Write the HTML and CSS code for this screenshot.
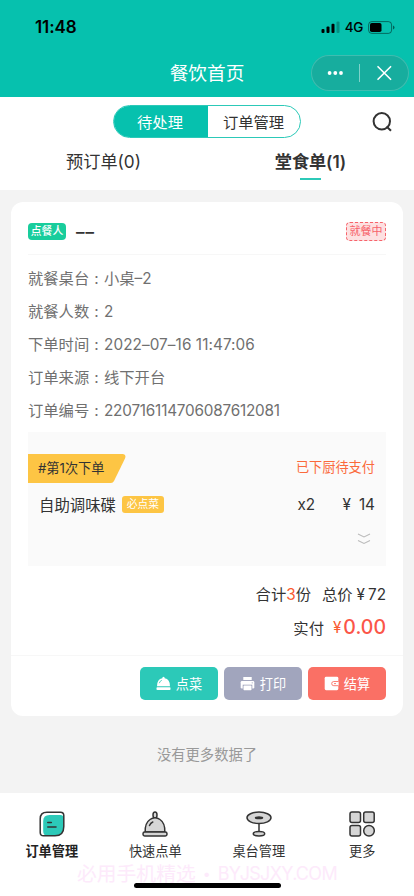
FILE: index.html
```html
<!DOCTYPE html>
<html lang="zh-CN">
<head>
<meta charset="utf-8">
<meta name="viewport" content="width=device-width, initial-scale=1">
<title>餐饮首页</title>
<link rel="stylesheet" href="styles.css">
</head>
<body>
<div class="app">
  <header class="top">
    <div class="status">
      <span class="time">11:48</span>
      <div class="signals">
        <svg width="19" height="12" viewBox="0 0 19 12"><rect x="0.5" y="8" width="3" height="4" rx="1"/><rect x="5.5" y="5.5" width="3" height="6.5" rx="1"/><rect x="10.5" y="2.7" width="3" height="9.3" rx="1"/><rect x="15.5" y="0.5" width="3" height="11.5" rx="1" opacity=".25"/></svg>
        <span class="net">4G</span>
        <svg width="27" height="13" viewBox="0 0 27 13"><rect x=".6" y=".6" width="23" height="11.8" rx="3.2" fill="none" stroke="#000" stroke-opacity=".45"/><rect x="2" y="2" width="11.5" height="9" rx="1.8"/><path d="M25 4.5q1.5 .5 1.5 2t-1.5 2z" opacity=".5"/></svg>
      </div>
    </div>
    <div class="nav">
      <h1>餐饮首页</h1>
      <div class="capsule">
        <svg width="97" height="36" viewBox="0 0 97 36" fill="#fff"><circle cx="18.600" cy="18" r="1.9"/><circle cx="24.300" cy="18" r="1.9"/><circle cx="30" cy="18" r="1.9"/><path d="M48.5 9v18" stroke="#fff" stroke-opacity=".45"/><path d="M67 11.7l12.6 12.6M79.600 11.700L67 24.300" stroke="#fff" stroke-width="1.6" stroke-linecap="round"/></svg>
      </div>
    </div>
  </header>

  <section class="filters">
    <div class="switch"><span class="on">待处理</span><span class="off">订单管理</span></div>
    <svg class="search" width="22" height="22" viewBox="0 0 22 22" fill="none" stroke="#333" stroke-width="2"><circle cx="9.800" cy="10.300" r="8.200"/><path d="M14.500 15.500l4.500 4.300"/></svg>
    <div class="tabs"><span>预订单(0)</span><span class="current">堂食单(1)</span></div>
  </section>

  <main class="content">
    <article class="card">
      <div class="card-head">
        <span class="who">点餐人</span><span class="name">––</span><span class="state">就餐中</span>
      </div>
      <dl class="info">
        <div><dt>就餐桌台</dt><dd>小桌–2</dd></div>
        <div><dt>就餐人数</dt><dd>2</dd></div>
        <div><dt>下单时间</dt><dd class="date">2022–07–16 11:47:06</dd></div>
        <div><dt>订单来源</dt><dd>线下开台</dd></div>
        <div><dt>订单编号</dt><dd class="code">220716114706087612081</dd></div>
      </dl>
      <div class="dishes">
        <div class="round">
          <div class="ribbon"><svg width="98" height="29" viewBox="0 0 98 29"><path d="M0 0H94.500Q98.500 .5 97 4.500L86 27Q85 29 83 29H0z" fill="#fdc544"/></svg><span>#第1次下单</span></div>
          <span class="pending">已下厨待支付</span>
        </div>
        <div class="dish">
          <span class="dish-name">自助调味碟</span><span class="must">必点菜</span><span class="qty">x2</span><span class="price"><i>¥</i>14</span>
        </div>
        <svg class="more" width="14" height="12" viewBox="0 0 14 12" fill="none" stroke="#bbb" stroke-width="1.100"><path d="M1 1l6 3 6-3M1 7.500l6 3 6-3"/></svg>
      </div>
      <div class="total"><span>合计<b>3</b>份</span><span class="sum">总价<i>¥</i>72</span></div>
      <div class="paid"><span>实付</span><i>¥</i><strong>0.00</strong></div>
      <div class="actions">
        <button class="order"><svg width="15" height="15" viewBox="0 0 15 15"><path d="M1 10.200Q1 3.300 6.300 2.300Q6.200 .8 7.500 .8T8.700 2.300Q14 3.300 14 10.200z" fill="#fff"/><path d="M3.300 7.200Q3.800 5 5.800 4.300" fill="none" stroke="#2cc9b8" stroke-width=".8"/><rect x=".5" y="11.300" width="14" height="2.700" rx=".8" fill="#fff"/></svg>点菜</button>
        <button class="print"><svg width="15" height="15" viewBox="0 0 15 15"><path d="M3.300 1h8.400v3H3.300z" fill="#fff"/><rect x=".7" y="5" width="13.600" height="7.500" rx="1.300" fill="#fff"/><path d="M2.700 8.700h9.600v5.600H2.700z" fill="#a1a5bd"/><rect x="3.500" y="9.400" width="8" height="4.800" rx=".7" fill="#fff"/><circle cx="12.200" cy="6.800" r=".6" fill="#a1a5bd"/></svg>打印</button>
        <button class="pay"><svg width="15" height="15" viewBox="0 0 15 15"><rect x=".7" y=".8" width="13.600" height="13.400" rx="1.400" fill="#fff"/><path d="M14.500 5.500H9.800a2.100 2.100 0 0 0 0 4.200h4.700" fill="#fff" stroke="#fa7065" stroke-width=".9"/><path d="M10 7.600h2" stroke="#fa7065" stroke-width=".9"/></svg>结算</button>
      </div>
    </article>
    <p class="end">没有更多数据了</p>
  </main>

  <nav class="tabbar">
    <div class="tab active"><svg width="26" height="26" viewBox="0 0 26 26"><path d="M8 1.200H21.500Q24.800 1.200 24.800 4.500V15.500Q24.800 24.800 16 24.800H4.500Q1.200 24.800 1.200 21.500V8Q1.200 1.200 8 1.200z" fill="#fff"/><path d="M10.500 4H21.500Q24.500 4 24.500 7V15.500Q24.500 24.500 16 24.500H8Q4.200 24.500 4.200 20V10Q4.200 4 10.500 4z" fill="#2cc9b8"/><path d="M8 1.200H21.500Q24.800 1.200 24.800 4.500V15.500Q24.800 24.800 16 24.800H4.500Q1.200 24.800 1.200 21.500V8Q1.200 1.200 8 1.200z" fill="none" stroke="#333" stroke-width="1.500"/><path d="M8.800 11.500h3.500M8.800 16h8.200" stroke="#333" stroke-width="1.600" stroke-linecap="round"/></svg><span>订单管理</span></div>
    <div class="tab"><svg width="26" height="26" viewBox="0 0 26 26" fill="#d6d6d6" stroke="#333" stroke-width="1.500"><ellipse cx="13" cy="4" rx="2" ry="3"/><path d="M3.200 21Q2.800 12 8 8.500Q10.300 6.800 13 6.800T18 8.500Q23.200 12 22.800 21z"/><rect x="1" y="21" width="24" height="4" rx="1.700"/><path d="M7.500 14.500q1-2.500 3.300-3.500" stroke-linecap="round"/></svg><span>快速点单</span></div>
    <div class="tab"><svg width="26" height="26" viewBox="0 0 26 26" fill="#d6d6d6" stroke="#333" stroke-width="1.500"><path d="M13 12v10"/><ellipse cx="13" cy="6.800" rx="12" ry="5.700"/><ellipse cx="13" cy="6.800" rx="3.500" ry=".8" fill="#333"/><ellipse cx="13" cy="22.800" rx="5.700" ry="2.200"/></svg><span>桌台管理</span></div>
    <div class="tab"><svg width="26" height="26" viewBox="0 0 26 26" fill="#d6d6d6" stroke="#333" stroke-width="1.500"><rect x="1" y="1" width="10.500" height="10.500" rx="2"/><rect x="14.700" y="1" width="10.500" height="10.500" rx="2"/><rect x="1" y="14.500" width="10.500" height="10.500" rx="2"/><circle cx="20" cy="19.800" r="5.300"/></svg><span>更多</span></div>
    <div class="watermark"><span>必用手机精选</span><span>•</span><span>BYJSJXY.COM</span></div>
    <div class="home"></div>
  </nav>
</div>
</body>
</html>
```
FILE: styles.css
```css
* { box-sizing: border-box; }
body, h1, p, dl, dd { margin: 0; }
body { font-family: Inter, "Noto Sans CJK SC", sans-serif; font-size: 15.3px; color: #333; background: #f3f3f3; }
i { font-style: normal; }
svg { display: block; flex: none; }
.app { width: 414px; height: 896px; display: flex; flex-direction: column; overflow: hidden; }

.top { height: 97px; background: #06c1ae; flex: none; }
.status { height: 54px; padding: 0 19px 0 35px; display: flex; align-items: center; justify-content: space-between; color: #000; }
.time { font-size: 17px; font-weight: 600; letter-spacing: -.1px; }
.signals { display: flex; align-items: center; gap: 5px; }
.net { font-size: 13.500px; font-weight: 500; letter-spacing: -.3px; }
.nav { position: relative; height: 38px; display: flex; align-items: center; justify-content: center; }
h1 { font-size: 18.700px; font-weight: 400; color: #fff; line-height: 40px; padding-top: 1px; }
.capsule { position: absolute; right: 5px; top: 1px; width: 98px; height: 36px; border-radius: 18px; background: #17ad9e; box-shadow: inset 0 0 0 1px #3fbdb0; }

.filters { position: relative; height: 93px; background: #fff; flex: none; padding-top: 8px; }
.switch { width: 188px; height: 33px; margin: 0 auto 0 113px; display: flex; border: 1px solid #2cc9b8; border-radius: 17px; overflow: hidden; line-height: 33px; text-align: center; }
.on { width: 94px; background: #06c1ae; color: #fff; padding-right: 2px; }
.off { flex: 1; padding-right: 1px; }
.search { position: absolute; left: 372px; top: 14px; }
.tabs { display: flex; text-align: center; font-size: 17.200px; line-height: 26px; margin-top: 11px; }
.tabs span { width: 207px; }
.current { position: relative; font-weight: 600; letter-spacing: -.1px; }
.current::after { content: ""; position: absolute; left: 93px; bottom: -5px; width: 21px; height: 2px; background: #2cc9b8; }

.content { flex: 1; padding: 12px 11px 0 11px; }
.card { height: 514px; background: #fff; border-radius: 12px; padding: 0 17px; }
.card-head { height: 53px; display: flex; align-items: center; padding-top: 6px; border-bottom: 1px solid #f7f7f7; }
.who { width: 38px; height: 17px; border-radius: 4px; background: #19cd9c; color: #fff; font-size: 10.800px; font-weight: 500; line-height: 17px; text-align: center; }
.name { margin-left: 10px; padding-top: 2px; font-size: 17px; font-weight: 600; letter-spacing: 1px; }
.state { margin-left: auto; width: 40px; height: 19px; border: 1px dashed #f7636b; border-radius: 4px; background: #fde0e1; color: #f7636b; font-size: 11px; line-height: 17px; text-align: center; }
.info { padding-top: 7px; color: #707070; height: 177px; }
.info div { display: flex; height: 33px; line-height: 33px; }
dt { width: 76px; white-space: nowrap; }
dt::after { content: ":"; margin-left: 5px; }
.date { letter-spacing: .08px; }
.code { letter-spacing: -.21px; }

.dishes { height: 134px; background: #fafafa; padding-top: 22px; }
.round { display: flex; justify-content: space-between; align-items: center; height: 29px; padding-right: 11px; font-size: 13.200px; }
.ribbon { display: grid; align-items: center; }
.ribbon > * { grid-area: 1 / 1; }
.ribbon span { padding-left: 10px; line-height: 29px; }
.pending { color: #fa6a3c; line-height: 27px; padding-bottom: 2px; }
.dish { display: flex; align-items: center; height: 43px; padding: 0 11px; }
.dish-name { padding-bottom: 2px; font-size: 15.400px; }
.must { width: 42px; height: 17px; margin-left: 6px; border-radius: 3px; background: #fdc544; color: #fff; font-size: 10.800px; line-height: 17px; text-align: center; }
.qty { margin-left: auto; width: 45px; }
.price i { margin-right: 8px; }
.more { margin: 7px 15px 0 auto; }

.total { display: flex; justify-content: flex-end; gap: 11px; line-height: 34px; margin-top: 12px; height: 33px; }
.total b { font-weight: 400; color: #fa5a30; }
.sum i { margin: 0 3px 0 4px; }
.paid { display: flex; align-items: center; justify-content: flex-end; height: 33px; }
.paid span { padding-bottom: 2px; }
.paid i { color: #fa5a30; margin: 0 2px 0 9px; }
.paid strong { color: #fb5548; font-size: 19.500px; font-weight: 500; line-height: 33px; }
.actions { margin: 11px -17px 0; padding: 11px 17px; border-top: 1px solid #f7f7f7; display: flex; justify-content: flex-end; gap: 6px; }
button { width: 78px; height: 33px; border: 0; border-radius: 5px; padding: 0; display: flex; align-items: center; justify-content: center; gap: 5px; color: #fff; font: 13.200px Inter, "Noto Sans CJK SC", sans-serif; }
.order { background: #2cc9b8; }
.print { background: #a1a5bd; }
.pay { background: #fa7065; }
.end { text-align: center; color: #999; font-size: 14.300px; line-height: 24px; margin-top: 27px; }

.tabbar { position: relative; height: 103px; flex: none; background: #fff; display: flex; padding-top: 18px; font-size: 13.200px; }
.tab { flex: 1; display: flex; flex-direction: column; align-items: center; gap: 4px; line-height: 20px; }
.active { font-weight: 600; color: #222; }
.watermark { position: absolute; left: 77px; top: 67px; display: flex; font-size: 19.800px; line-height: 28px; color: #fdeafb; white-space: nowrap; }
.watermark span:nth-child(2) { width: 22px; text-align: center; font-size: 14px; }
.watermark span:nth-child(3) { font-size: 18px; letter-spacing: -.7px; }
.home { position: absolute; left: 134px; bottom: 8px; width: 147px; height: 5px; border-radius: 3px; background: #000; }
```
